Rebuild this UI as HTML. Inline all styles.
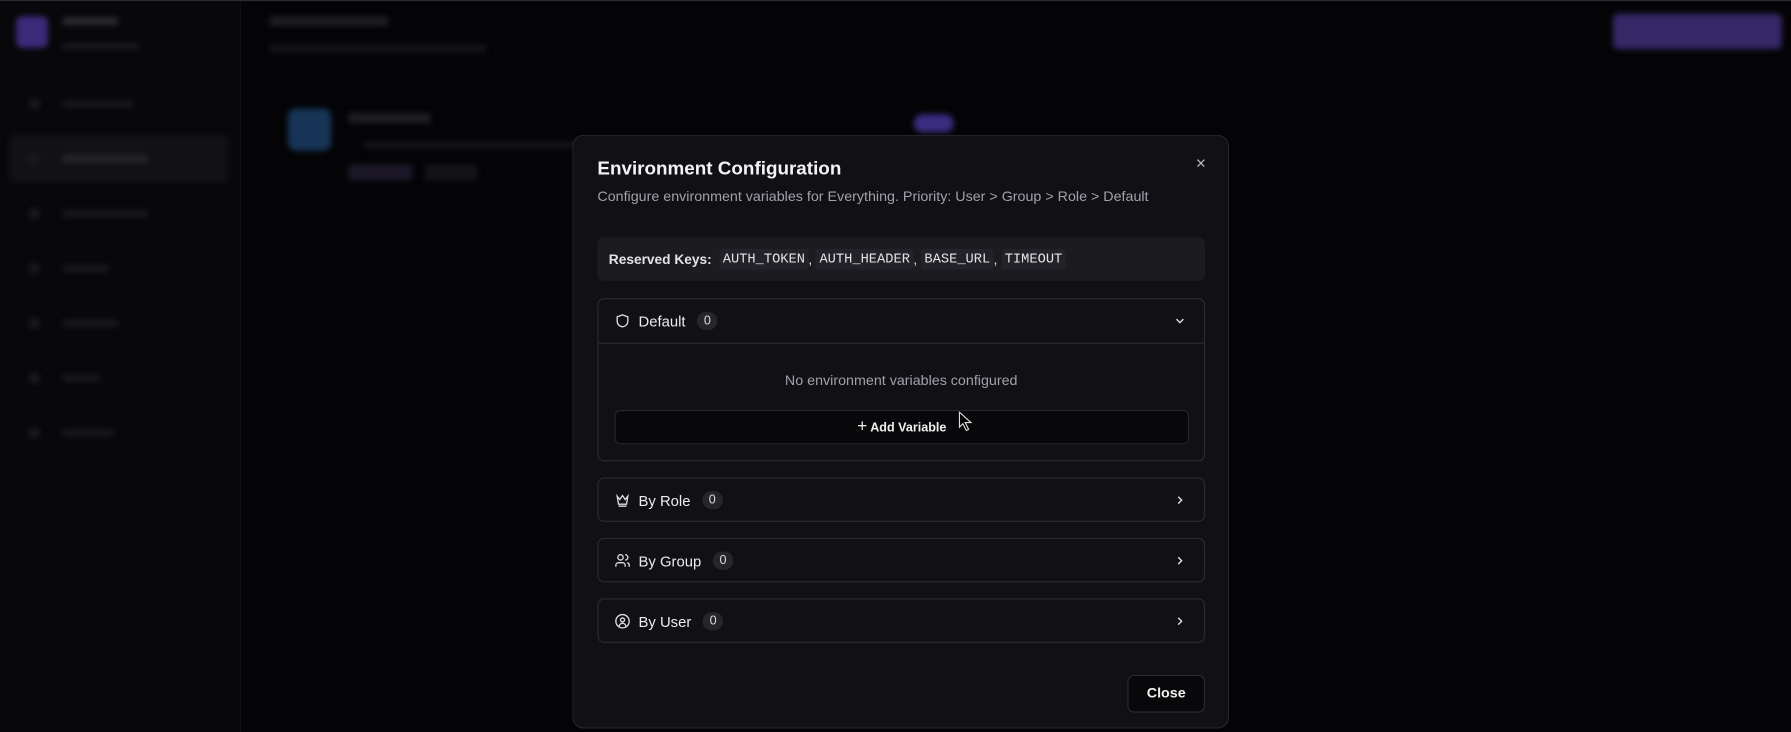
<!DOCTYPE html>
<html><head><meta charset="utf-8"><style>
html,body{margin:0;padding:0;width:1791px;height:732px;overflow:hidden;background:#040406;}
#s{position:absolute;left:0;top:0;width:1568px;height:641px;transform:scale(1.14222,1.14197);transform-origin:0 0;font-family:"Liberation Sans",sans-serif;}
.a{position:absolute;}
.blur{filter:blur(2.5px);}
.sec{position:absolute;left:22px;width:530px;border:1px solid #2a2a31;border-radius:6px;box-sizing:border-box;}
.hd{height:38px;display:flex;align-items:center;padding-left:14px;color:#ececef;font-size:13px;}
.hd svg{margin-right:7px}
.badge{display:inline-block;background:#25252b;color:#ddd;font-size:11px;border-radius:9px;padding:2px 6px;margin-left:10px;}
.chev{position:absolute;right:14px;top:13px}
code{font-family:"Liberation Mono",monospace;font-size:12px;background:#222228;padding:2px 3px;border-radius:3px;color:#e4e4e7}
.si{position:absolute;left:25px;width:10px;height:10px;border-radius:5px;background:#1a1a1e}
.st{position:absolute;left:55px;height:6px;background:#1a1a1e}
</style></head><body><div id="s">
<div class="a" style="left:0;top:0;width:1568px;height:1px;background:#2b2b30"></div>
<div class="a" style="left:0;top:1px;width:210px;height:640px;background:#08080a"></div>
<div class="a" style="left:210px;top:1px;width:1px;height:640px;background:#0f0f12"></div>
<div class="blur">
<div class="a" style="left:14px;top:14px;width:28px;height:28px;border-radius:6px;background:#3a2a78"></div>
<div class="a" style="left:55px;top:15px;width:48px;height:7px;background:#2a2a30"></div>
<div class="a" style="left:55px;top:38px;width:66px;height:5px;background:#1c1c20"></div>
<div class="a" style="left:8px;top:118px;width:192px;height:42px;border-radius:6px;background:#121216"></div>
<div class="si" style="top:86px"></div><div class="st" style="top:88px;width:62px"></div>
<div class="si" style="top:134px"></div><div class="st" style="top:136px;width:74px;background:#26262b"></div>
<div class="si" style="top:182px"></div><div class="st" style="top:184px;width:74px"></div>
<div class="si" style="top:230px"></div><div class="st" style="top:232px;width:40px"></div>
<div class="si" style="top:278px"></div><div class="st" style="top:280px;width:48px"></div>
<div class="si" style="top:326px"></div><div class="st" style="top:328px;width:32px"></div>
<div class="si" style="top:374px"></div><div class="st" style="top:376px;width:44px"></div>
<div class="a" style="left:236px;top:14px;width:104px;height:9px;background:#1d1d22"></div>
<div class="a" style="left:236px;top:39px;width:190px;height:7px;background:#141418"></div>
<div class="a" style="left:252px;top:95px;width:38px;height:37px;border-radius:7px;background:#173456"></div>
<div class="a" style="left:305px;top:99px;width:72px;height:9px;background:#1e1e22"></div>
<div class="a" style="left:318px;top:124px;width:190px;height:6px;background:#141418"></div>
<div class="a" style="left:305px;top:144px;width:56px;height:14px;background:#1b1728"></div>
<div class="a" style="left:372px;top:144px;width:46px;height:14px;background:#141418"></div>
<div class="a" style="left:1412px;top:12px;width:148px;height:31px;border-radius:5px;background:#362766"></div>
<div class="a" style="left:800px;top:100px;width:35px;height:16px;border-radius:8px;background:#3b2c80"></div>
</div>
<div class="a" style="left:501px;top:118px;width:575px;height:520px;background:#111115;border:1px solid #24242a;border-radius:10px;box-sizing:border-box;">
<div class="a" style="left:21px;top:20px;color:#f4f4f5;font-size:16.5px;font-weight:bold;">Environment Configuration</div>
<div class="a" style="left:545px;top:16px;color:#bbb;font-size:15px;">×</div>
<div class="a" style="left:21px;top:46px;color:#a1a1aa;font-size:12.5px;">Configure environment variables for Everything. Priority: User &gt; Group &gt; Role &gt; Default</div>
<div class="a" style="left:21px;top:89px;width:532px;height:38px;background:#1b1b20;border-radius:6px;color:#e4e4e7;font-size:12px;display:flex;align-items:center;padding-left:10px;box-sizing:border-box;"><b>Reserved Keys:</b>&nbsp;&nbsp;<code>AUTH_TOKEN</code>,&nbsp;<code>AUTH_HEADER</code>,&nbsp;<code>BASE_URL</code>,&nbsp;<code>TIMEOUT</code></div>
<div class="sec" style="top:142px;height:143px;left:21px;width:532px">
 <div class="hd" style="border-bottom:1px solid #2a2a31"><svg width="14" height="14" viewBox="0 0 24 24" fill="none" stroke="#ddd" stroke-width="2"><path d="M12 3l8 3v6c0 5-3.5 8-8 9-4.5-1-8-4-8-9V6z"/></svg>Default<span class="badge">0</span>
 <svg class="chev" style="right:8px" width="12" height="12" viewBox="0 0 24 24" fill="none" stroke="#ddd" stroke-width="2.5"><path d="M6 9l6 6 6-6"/></svg></div>
 <div class="a" style="left:0;top:64px;width:530px;text-align:center;color:#a1a1aa;font-size:12.5px;">No environment variables configured</div>
 <div class="a" style="left:14px;top:97px;width:503px;height:30px;background:#08080a;border:1px solid #26262c;border-radius:5px;box-sizing:border-box;text-align:center;line-height:28px;color:#f0f0f0;font-size:11px;font-weight:bold;"><span style="font-size:15px;font-weight:normal">+</span> Add Variable</div>
</div>
<div class="sec" style="top:299px;height:39px;left:21px;width:532px"><div class="hd"><svg width="14" height="14" viewBox="0 0 24 24" fill="none" stroke="#ddd" stroke-width="2"><path d="M4 6l4 5 4-6 4 6 4-5-2 12H6z M6 21h12"/></svg>By Role<span class="badge">0</span><svg class="chev" style="right:8px" width="12" height="12" viewBox="0 0 24 24" fill="none" stroke="#ddd" stroke-width="2.5"><path d="M9 6l6 6-6 6"/></svg></div></div>
<div class="sec" style="top:352px;height:39px;left:21px;width:532px"><div class="hd"><svg width="14" height="14" viewBox="0 0 24 24" fill="none" stroke="#ddd" stroke-width="2"><circle cx="9" cy="7" r="4"/><path d="M2 21v-2a4 4 0 014-4h6a4 4 0 014 4v2M16 3a4 4 0 010 8M22 21v-2a4 4 0 00-3-4"/></svg>By Group<span class="badge">0</span><svg class="chev" style="right:8px" width="12" height="12" viewBox="0 0 24 24" fill="none" stroke="#ddd" stroke-width="2.5"><path d="M9 6l6 6-6 6"/></svg></div></div>
<div class="sec" style="top:405px;height:39px;left:21px;width:532px"><div class="hd"><svg width="14" height="14" viewBox="0 0 24 24" fill="none" stroke="#ddd" stroke-width="2"><circle cx="12" cy="12" r="10"/><circle cx="12" cy="10" r="3"/><path d="M7 20a5 5 0 0110 0"/></svg>By User<span class="badge">0</span><svg class="chev" style="right:8px" width="12" height="12" viewBox="0 0 24 24" fill="none" stroke="#ddd" stroke-width="2.5"><path d="M9 6l6 6-6 6"/></svg></div></div>
<div class="a" style="left:485px;top:472px;width:68px;height:33px;background:#08080a;border:1px solid #2a2a31;border-radius:6px;box-sizing:border-box;text-align:center;line-height:31px;color:#f0f0f0;font-size:12.5px;font-weight:bold;">Close</div>
</div>
<svg class="a" style="left:839px;top:360px" width="14" height="18" viewBox="0 0 14 18"><path d="M1 1v13l3-3 3 6 2-1-3-6h5z" fill="#000" stroke="#ddd" stroke-width="1"/></svg>
</div></body></html>
